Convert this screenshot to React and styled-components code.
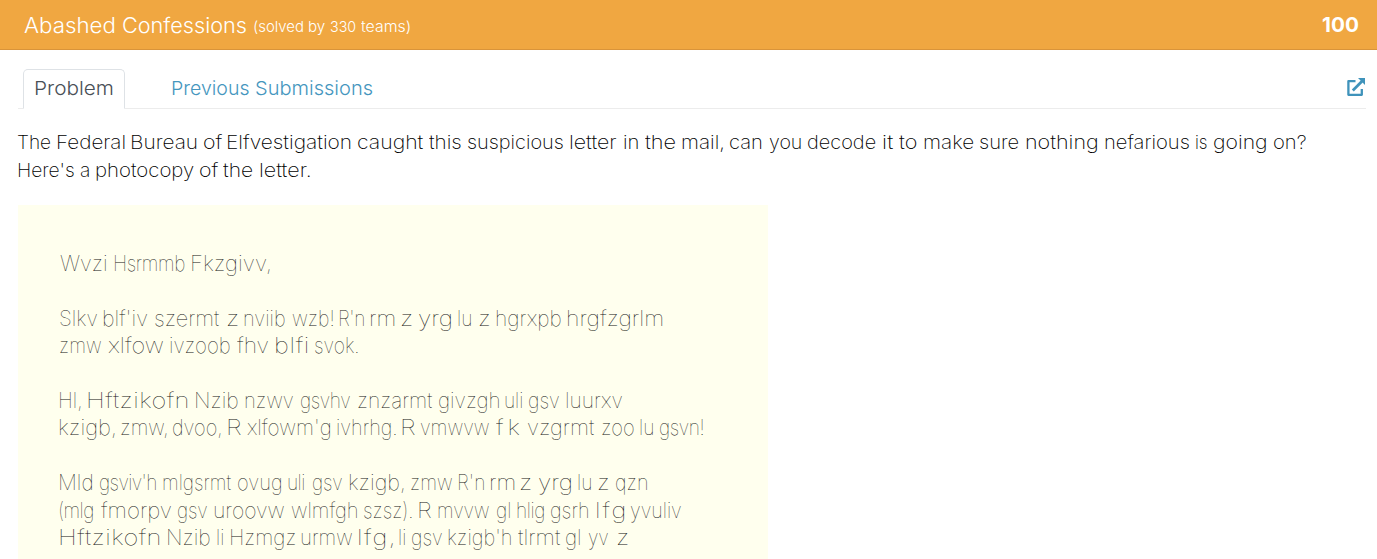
import React from "react";
import styled, { createGlobalStyle } from "styled-components";

const Global = createGlobalStyle`
  * { box-sizing: border-box; }
  body { margin: 0; background: #fff; overflow: hidden; font-family: Inter, "Liberation Sans", sans-serif; font-weight: 300; }
`;

const Page = styled.div`
  height: 559px;
  overflow: hidden;
`;

const Header = styled.header`
  display: flex;
  justify-content: space-between;
  height: 50px;
  padding-right: 19px;
  background: #f0a741;
  border-bottom: 1px solid #d9943a;
  color: #fff;
`;

const Title = styled.div`
  display: flex;
`;

const Nav = styled.nav`
  display: flex;
  justify-content: space-between;
  height: 40px;
  margin: 19px 11px 0 18px;
  border-bottom: 1px solid #ececec;
`;

const TabList = styled.div`
  display: flex;
  padding-left: 5px;
`;

const Tab = styled.div`
  width: ${(p) => p.$width}px;
  height: 40px;
  border: 1px solid ${(p) => (p.$active ? "#dee2e6" : "transparent")};
  border-bottom-color: ${(p) => (p.$active ? "#fff" : "transparent")};
  border-radius: 5px 5px 0 0;
  color: ${(p) => (p.$active ? "#495057" : "#4596be")};
`;

const OpenLink = styled.svg`
  width: 19px;
  height: 19px;
  margin: 9px 1px 0 0;
`;

const Statement = styled.div`
  padding-top: 19px;
  color: #000;
`;

const Letter = styled.article`
  width: 750px;
  height: 360px;
  margin: 21px 0 0 18px;
  padding-top: 45px;
  background: #ffffee;
  color: #111;
`;

const Line = styled.div`
  height: ${(p) => p.$height}px;
  line-height: ${(p) => p.$height}px;
  margin-top: ${(p) => p.$gap || 0}px;
  font-size: ${(p) => p.$size}px;
  font-weight: ${(p) => p.$weight || 300};
  white-space: pre;
`;

const Word = styled.span`
  display: inline-block;
  white-space: pre;
  transform-origin: 0 50%;
`;

const ctx = document.createElement("canvas").getContext("2d");

/* Sets each word between its start and end: the letters widen or narrow a little, spacing takes the rest. */
function Spread({ words, origin = 0, size, weight = 300, height, gap }) {
  ctx.font = `${weight} ${size}px Inter`;
  let cursor = origin;
  return (
    <Line $size={size} $weight={weight} $height={height} $gap={gap}>
      {words.map(([text, start, end], i) => {
        const m = ctx.measureText(text);
        const ink = m.actualBoundingBoxLeft + m.actualBoundingBoxRight;
        const scale = Math.min(1.16, Math.max(0.87, (end - start) / ink));
        const spacing = text.length > 1 ? ((end - start) / scale - ink) / (text.length - 1) : 0;
        const marginLeft = start + m.actualBoundingBoxLeft * scale - cursor;
        const width = end - start;
        cursor += marginLeft + width;
        return (
          <Word key={i} style={{ marginLeft, width, letterSpacing: spacing, transform: `scaleX(${scale})` }}>
            {text}{i < words.length - 1 ? " " : ""}
          </Word>
        );
      })}
    </Line>
  );
}

const statement = [
  [["The", 18, 51], ["Federal", 58.5, 125], ["Bureau", 132.5, 197], ["of", 204, 222], ["Elfvestigation", 228.5, 351], ["caught", 358, 423], ["this", 429, 461], ["suspicious", 468, 563], ["letter", 570, 617], ["in", 624, 638], ["the", 645, 676], ["mail,", 682.5, 724], ["can", 730.5, 762], ["you", 769, 801], ["decode", 808, 876], ["it", 883, 893], ["to", 899, 917], ["make", 924, 974], ["sure", 980, 1019], ["nothing", 1026, 1097], ["nefarious", 1105, 1189], ["is", 1196, 1207], ["going", 1214, 1266], ["on?", 1274, 1306]],
  [["Here's", 19, 74], ["a", 80, 89], ["photocopy", 96.5, 194], ["of", 200, 218], ["the", 223, 253], ["letter.", 260, 310]],
];

const letter = [
  { words: [["Wvzi", 60, 106], ["Hsrmmb", 115, 185], ["Fkzgivv,", 192, 270]] },
  { gap: 27, words: [["Slkv", 60, 97], ["blf'iv", 104, 147], ["szermt", 155, 219], ["z", 227, 238], ["nviib", 245, 285], ["wzb!", 292, 333], ["R'n", 340, 364], ["rm", 371, 394], ["z", 401, 412], ["yrg", 419, 451], ["lu", 459, 471], ["z", 479, 489], ["hgrxpb", 497, 561], ["hrgfzgrlm", 568, 662]] },
  { words: [["zmw", 60, 101], ["xlfow", 108, 163], ["ivzoob", 170, 230], ["fhv", 237, 268], ["blfi", 276, 307], ["svok.", 315, 358]] },
  { gap: 27, words: [["Hl,", 60, 81], ["Hftzikofn", 88, 187], ["Nzib", 196, 238], ["nzwv", 246, 293], ["gsvhv", 301, 350], ["znzarmt", 358, 432], ["givzgh", 439, 499], ["uli", 506, 522], ["gsv", 529, 559], ["luurxv", 567, 622]] },
  { words: [["kzigb,", 60, 115], ["zmw,", 121, 167], ["dvoo,", 173, 221], ["R", 228, 241], ["xlfowm'g", 247, 330], ["ivhrhg.", 337, 396], ["R", 402, 415], ["vmwvw", 421, 489], ["fk", 496, 519], ["vzgrmt", 528, 594], ["zoo", 602, 634], ["lu", 641, 653], ["gsvn!", 660, 703]] },
  { gap: 27, words: [["Mld", 60, 92], ["gsviv'h", 100, 156], ["mlgsrmt", 164, 231], ["ovug", 238, 281], ["uli", 289, 304], ["gsv", 313, 342], ["kzigb,", 350, 404], ["zmw", 411, 452], ["R'n", 459, 484], ["rm", 491, 514], ["z", 520, 531], ["yrg", 539, 571], ["lu", 579, 591], ["z", 598, 608], ["qzn", 616, 647]] },
  { words: [["(mlg", 60, 93], ["fmorpv", 101, 171], ["gsv", 178, 207], ["uroovw", 215, 284], ["wlmfgh", 291, 357], ["szsz).", 364, 412], ["R", 419, 431], ["mvvw", 439, 489], ["gl", 497, 510], ["hlig", 518, 544], ["gsrh", 551, 588], ["lfg", 597, 624], ["yvuliv", 631, 681]] },
  { words: [["Hftzikofn", 60, 159], ["Nzib", 168, 210], ["li", 218, 223], ["Hzmgz", 231, 295], ["urmw", 302, 352], ["lfg,", 359, 393], ["li", 400, 405], ["gsv", 412, 442], ["kzigb'h", 449, 511], ["tlrmt", 518, 560], ["gl", 566, 580], ["yv", 589, 608], ["z", 617, 628]] },
];

export default function App() {
  return (
    <Page>
      <Global />
      <Header>
        <Title>
          <Spread size={21.3} height={50} words={[["Abashed", 24, 115], ["Confessions", 123, 246]]} />
          <Spread size={14.8} height={54} origin={246} words={[["(solved", 255, 304], ["by", 310, 326], ["330", 331, 357], ["teams)", 362, 411]]} />
        </Title>
        <Spread size={20.5} weight={700} height={50} origin={1322} words={[["100", 1322, 1358]]} />
      </Header>
      <Nav>
        <TabList>
          <Tab $active $width={102}><Spread size={19.3} height={37} origin={24} words={[["Problem", 35, 113]]} /></Tab>
          <Tab $width={260}><Spread size={19.3} height={37} origin={126} words={[["Previous", 172.5, 249], ["Submissions", 256, 372]]} /></Tab>
        </TabList>
        <OpenLink viewBox="0 0 19 19" fill="none" stroke="#3f93bb" strokeWidth="2.3" strokeLinejoin="round">
          <path d="M9.5 3.2H2.4v13.6h13.4V11" />
          <path d="M6.8 12.5 16 3.3" strokeWidth="2.8" />
          <path d="M12 0H19v7z" fill="#3f93bb" stroke="none" />
        </OpenLink>
      </Nav>
      <Statement>
        {statement.map((words, i) => <Spread key={i} size={19.3} weight={250} height={28} words={words} />)}
      </Statement>
      <Letter>
        {letter.map((l, i) => <Spread key={i} size={22} weight={100} height={27.6} origin={18} gap={l.gap} words={l.words} />)}
      </Letter>
    </Page>
  );
}
